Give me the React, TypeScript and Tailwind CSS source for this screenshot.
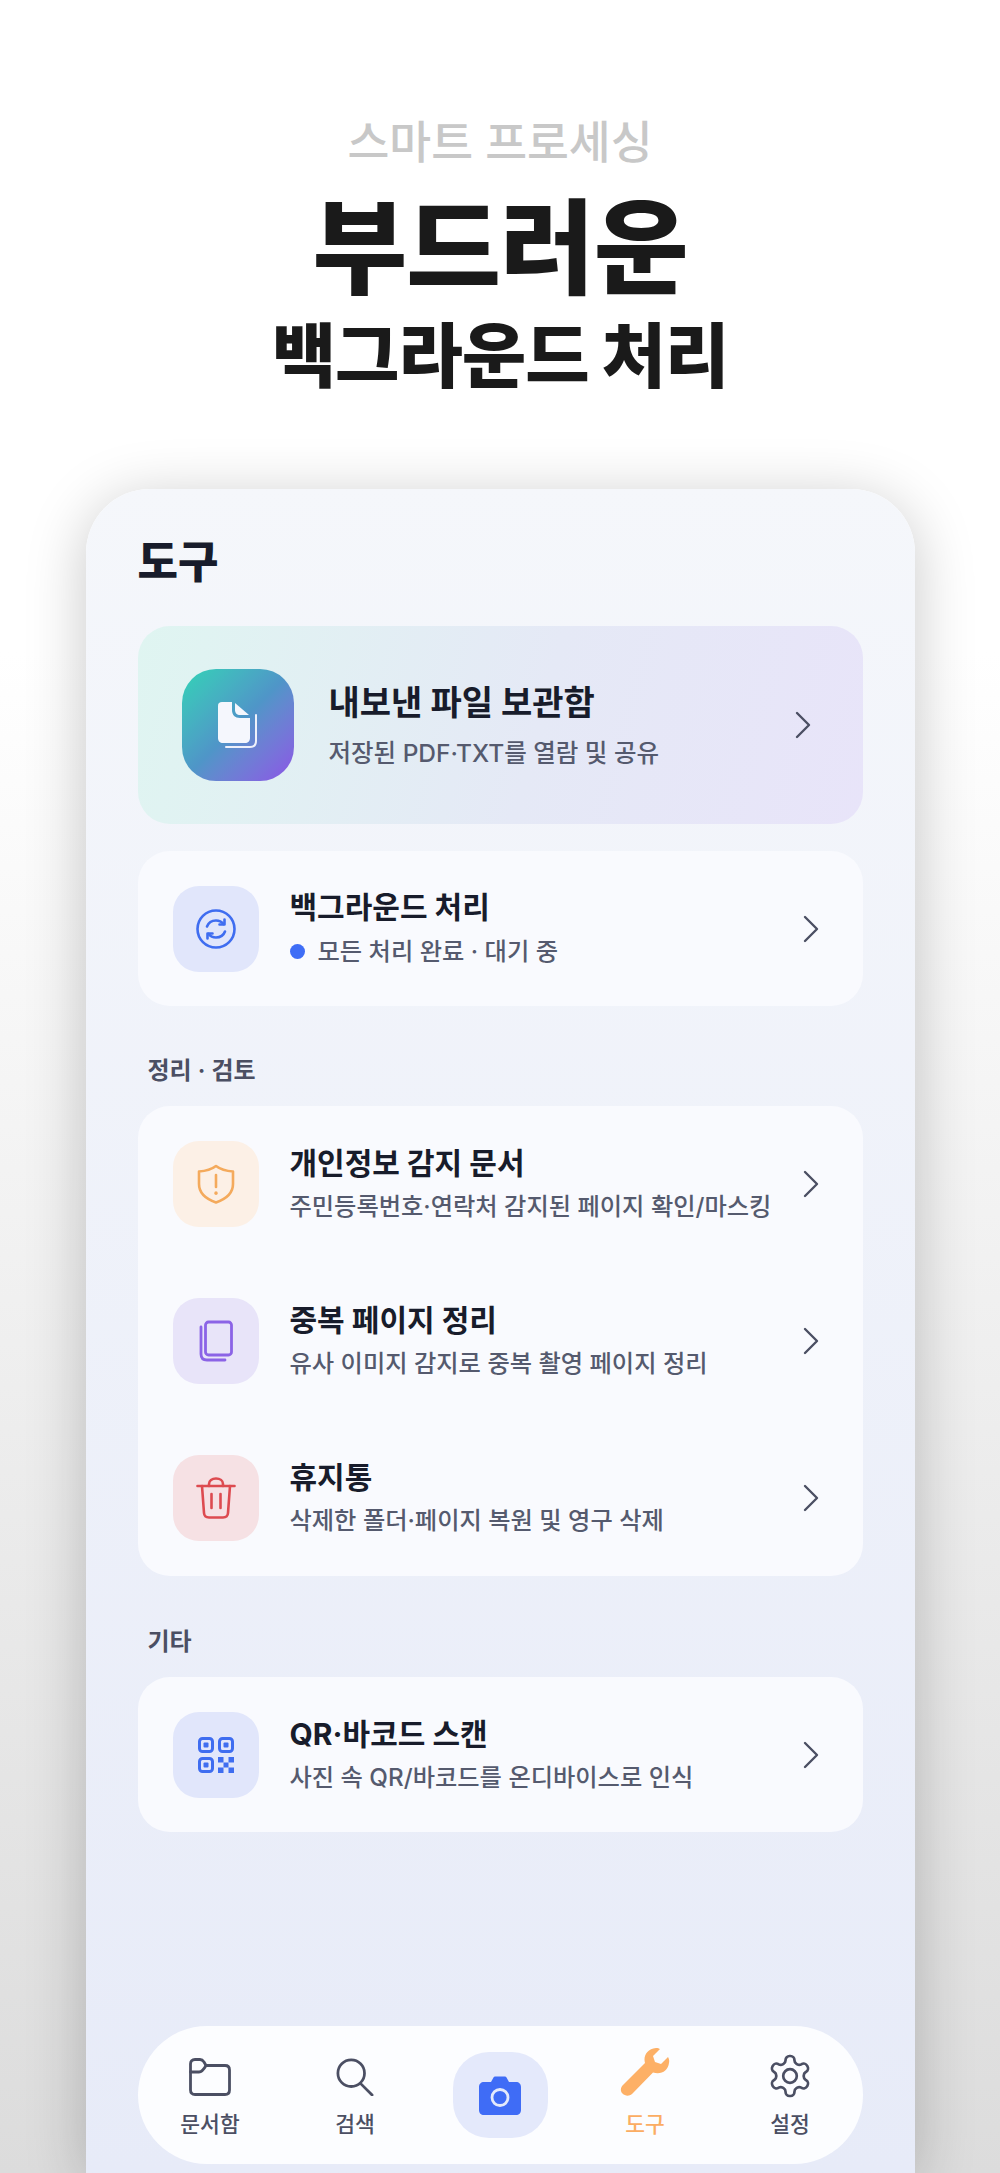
import React from "react";

const FONT = "font-['Inter','Noto_Sans_CJK_KR','Noto_Sans',sans-serif]";

function Chevron({ className = "" }: { className?: string }) {
  return (
    <svg width="16" height="28" viewBox="0 0 16 28" fill="none" className={className}>
      <path d="M2 2 L14 14 L2 26" stroke="#4b4f63" strokeWidth="2.4" strokeLinecap="round" strokeLinejoin="round" />
    </svg>
  );
}

function SyncIcon() {
  return (
    <svg width="40" height="40" viewBox="0 0 40 40" fill="none" stroke="#3f6df0" strokeWidth="2.6" strokeLinecap="round" strokeLinejoin="round">
      <circle cx="20" cy="20" r="18.5" />
      <path d="M11 17.5c1.500-4 5-6 9-6 3 0 5.500 1 7.500 3.500" />
      <path d="M28.500 10.500v5h-5" />
      <path d="M29 22.500c-1.500 4-5 6-9 6-3 0-5.500-1-7.500-3.500" />
      <path d="M11.500 29.500v-5h5" />
    </svg>
  );
}

function ShieldIcon() {
  return (
    <svg width="38" height="40" viewBox="0 0 38 40" fill="none" stroke="#f4aa5c" strokeWidth="2.6" strokeLinecap="round" strokeLinejoin="round">
      <path d="M19 2 C23 5 29 7 36 7.500 V20 C36 29 29 35 19 38.500 C9 35 2 29 2 20 V7.500 C9 7 15 5 19 2 Z" />
      <path d="M19 11 V23" />
      <path d="M19 29 V29.200" strokeWidth="3.400" />
    </svg>
  );
}

function PagesIcon() {
  return (
    <svg width="34" height="42" viewBox="0 0 34 42" fill="none" stroke="#8b63e6" strokeWidth="2.8" strokeLinecap="round" strokeLinejoin="round">
      <rect x="6.500" y="2" width="26" height="33" rx="3" />
      <path d="M2 7 V34 C2 38 4 40 8 40 H26" />
    </svg>
  );
}

function TrashIcon() {
  return (
    <svg width="40" height="42" viewBox="0 0 40 42" fill="none" stroke="#dd4b50" strokeWidth="2.6" strokeLinecap="round" strokeLinejoin="round">
      <path d="M1.500 9 H38.500" />
      <path d="M13 9 V7 C13 3.500 16 1.500 20 1.500 C24 1.500 27 3.500 27 7 V9" />
      <path d="M6 9 L8 36 C8.200 39 10 40.500 13 40.500 H27 C30 40.500 31.800 39 32 36 L34 9" />
      <path d="M15.500 17 V31" />
      <path d="M24.500 17 V31" />
    </svg>
  );
}

function QrIcon() {
  return (
    <svg width="36" height="36" viewBox="0 0 36 36" fill="none">
      <g stroke="#3f6df0" strokeWidth="3">
        <rect x="1.500" y="1.500" width="13" height="13" rx="3" />
        <rect x="21.500" y="1.500" width="13" height="13" rx="3" />
        <rect x="1.500" y="21.500" width="13" height="13" rx="3" />
      </g>
      <g fill="#3f6df0">
        <rect x="5.500" y="5.500" width="5" height="5" rx="1" />
        <rect x="25.500" y="5.500" width="5" height="5" rx="1" />
        <rect x="5.500" y="25.500" width="5" height="5" rx="1" />
        <rect x="20" y="20" width="5.500" height="5.500" />
        <rect x="30.500" y="20" width="5.500" height="5.500" />
        <rect x="25.500" y="25.500" width="5" height="5" />
        <rect x="20" y="30.500" width="5.500" height="5.500" />
        <rect x="30.500" y="30.500" width="5.500" height="5.500" />
      </g>
    </svg>
  );
}

function FolderIcon() {
  return (
    <svg width="42" height="38" viewBox="0 0 42 38" fill="none" stroke="#4b4f63" strokeWidth="2.800" strokeLinecap="round" strokeLinejoin="round">
      <path d="M1.500 6 C1.500 3 3 1.500 6 1.500 H11 C13 1.500 14 2.500 15 4 L17 7.500 H36 C39 7.500 40.500 9 40.500 12 V32 C40.500 35 39 36.500 36 36.500 H6 C3 36.500 1.500 35 1.500 32 Z" />
      <path d="M1.500 14 H10 C13 14 14.500 12 17 7.500" />
    </svg>
  );
}

function SearchIcon() {
  return (
    <svg width="38" height="38" viewBox="0 0 40 40" fill="none" stroke="#4b4f63" strokeWidth="2.900" strokeLinecap="round">
      <circle cx="16" cy="16" r="14" />
      <path d="M26 27 L38 39" />
    </svg>
  );
}

function CameraIcon() {
  return (
    <svg width="42" height="39" viewBox="0 0 42 39" fill="none">
      <path d="M5 6 H12 L14.500 1.500 C15 .8 15.500 .5 16.500 .5 H25.500 C26.500 .5 27 .8 27.500 1.500 L30 6 H37 C40 6 42 8 42 11 V34 C42 37 40 39 37 39 H5 C2 39 0 37 0 34 V11 C0 8 2 6 5 6 Z" fill="#3f6cf6" />
      <circle cx="21" cy="21.500" r="8" stroke="#e4eafb" strokeWidth="2.800" />
    </svg>
  );
}

function WrenchIcon() {
  return (
    <svg width="50" height="48" viewBox="0 0 50 48" fill="none">
      <path
        d="M3 37 L25 15 C23 8 27 1 36 0 C38 0 39 .5 40 1 L33 8 L35 14 L41 16 L48 9 C49 11 49.500 12 49 15 C48 23 41 27 33 24.500 L12 46 C9 48.500 5 48 2.500 45.500 C0 43 0.500 39.500 3 37 Z"
        fill="#fdb066"
      />
    </svg>
  );
}

function GearIcon() {
  return (
    <svg width="48" height="50" viewBox="0 0 24 24" fill="none" stroke="#4b4f63" strokeWidth="1.350" strokeLinecap="round" strokeLinejoin="round" className="-my-[5px]">
      <path d="M12.220 2h-.44a2 2 0 0 0-2 2v.18a2 2 0 0 1-1 1.730l-.43.250a2 2 0 0 1-2 0l-.15-.08a2 2 0 0 0-2.730.730l-.22.380a2 2 0 0 0 .730 2.730l.15.100a2 2 0 0 1 1 1.720v.510a2 2 0 0 1-1 1.740l-.15.090a2 2 0 0 0-.730 2.730l.22.380a2 2 0 0 0 2.730.730l.15-.08a2 2 0 0 1 2 0l.43.250a2 2 0 0 1 1 1.730V20a2 2 0 0 0 2 2h.44a2 2 0 0 0 2-2v-.18a2 2 0 0 1 1-1.730l.43-.250a2 2 0 0 1 2 0l.15.080a2 2 0 0 0 2.730-.730l.22-.390a2 2 0 0 0-.730-2.730l-.15-.080a2 2 0 0 1-1-1.740v-.5a2 2 0 0 1 1-1.740l.15-.090a2 2 0 0 0 .730-2.730l-.22-.380a2 2 0 0 0-2.730-.730l-.15.080a2 2 0 0 1-2 0l-.43-.250a2 2 0 0 1-1-1.730V4a2 2 0 0 0-2-2z" />
      <circle cx="12" cy="12" r="3.400" />
    </svg>
  );
}

function DocIcon() {
  return (
    <svg width="40" height="46" viewBox="0 0 40 46" fill="none">
      <path d="M38 13 V39 C38 43 36 45 32 45 H8" stroke="#eef1fb" strokeWidth="2" strokeLinecap="round" />
      <path d="M4 0 H14 V8 C14 13 17 16 22 16 H32 V36 C32 39 30 41 27 41 H5 C2 41 0 39 0 36 V4 C0 1 1.500 0 4 0 Z" fill="#f5f7fd" />
      <path d="M17 1 L31 13 H22 C19 13 17 11 17 8 Z" fill="#f5f7fd" />
    </svg>
  );
}

interface RowProps {
  icon: React.ReactNode;
  tile: string;
  title: string;
  children: React.ReactNode;
}

function Row({ icon, tile, title, children }: RowProps) {
  return (
    <div className="flex items-center h-[86px]">
      <div className={`w-[86px] h-[86px] rounded-[26px] flex items-center justify-center shrink-0 ${tile}`}>{icon}</div>
      <div className="ml-[31px] flex-1 min-w-0 pb-[1px]">
        <div className="text-[30px] leading-[40px] font-bold text-[#181c2b]">{title}</div>
        <div className="mt-[7px] text-[24.250px] leading-[34px] font-medium text-[#555a6e] whitespace-nowrap">{children}</div>
      </div>
      <Chevron className="mr-[8px] shrink-0" />
    </div>
  );
}

function Card({ children, className = "" }: { children: React.ReactNode; className?: string }) {
  return <div className={`rounded-[32px] bg-[#f9fafe] pl-[35px] pr-[36px] ${className}`}>{children}</div>;
}

function NavItem({ icon, label, active = false }: { icon: React.ReactNode; label: string; active?: boolean }) {
  return (
    <div className="flex flex-col items-center pb-[6px]">
      <div className="h-[50px] flex items-end justify-center">{icon}</div>
      <div className={`mt-[13px] text-[21.500px] leading-[30px] font-medium ${active ? "text-[#fbad63]" : "text-[#4b4f63]"}`}>{label}</div>
    </div>
  );
}

export default function App() {
  return (
    <div className={`${FONT} w-[1000px] h-[2173px] overflow-hidden bg-gradient-to-b from-white from-30% to-[#dcdcdc] flex flex-col items-center`}>
      <div className="mt-[113px] text-[45.500px] leading-[60px] font-medium text-[#c8c8c8]">스마트 프로세싱</div>
      <div className="mt-[14px] text-[103px] leading-[124px] font-black text-[#1a1a1a] tracking-[-1px]">부드러운</div>
      <div className="mt-[1px] text-[70px] leading-[90px] font-black text-[#1a1a1a] tracking-[-1px]">백그라운드 처리</div>

      <div className="mt-[87px] w-[829px] flex-1 rounded-t-[64px] bg-gradient-to-b from-[#f5f7fb] to-[#e7ebf8] shadow-[0_10px_60px_rgba(0,0,0,0.22)] px-[52px] flex flex-col">
        <h1 className="mt-[43px] text-[44px] leading-[60px] font-black text-[#181c2b]">도구</h1>

        <div className="mt-[34px] h-[198px] rounded-[32px] bg-[linear-gradient(105deg,#dff5f1,#e5e9f6_55%,#e8e4f9)] flex items-center pl-[44px] pr-[52px]">
          <div className="w-[112px] h-[112px] rounded-[34px] bg-gradient-to-br from-[#2fd3b5] via-[#4f95c8] to-[#8a52e6] flex items-center justify-center shrink-0">
            <DocIcon />
          </div>
          <div className="ml-[35px] flex-1">
            <div className="text-[34px] leading-[44px] font-bold text-[#181c2b]">내보낸 파일 보관함</div>
            <div className="mt-[11px] text-[24.500px] leading-[34px] font-medium text-[#555a6e] whitespace-nowrap">저장된 PDF·TXT를 열람 및 공유</div>
          </div>
          <Chevron />
        </div>

        <Card className="mt-[27px] h-[155px] flex flex-col justify-center">
          <Row icon={<SyncIcon />} tile="bg-[#e1e6fb]" title="백그라운드 처리">
            <span className="inline-flex items-center">
              <span className="w-[15px] h-[15px] rounded-full bg-[#3f6df6] mr-[13px]" />
              모든 처리 완료 · 대기 중
            </span>
          </Row>
        </Card>

        <div className="mt-[48px] pl-[10px] text-[24px] leading-[34px] font-semibold text-[#4b4f63]">정리 · 검토</div>

        <Card className="mt-[18px] h-[470px] flex flex-col justify-center gap-[71px]">
          <Row icon={<ShieldIcon />} tile="bg-[#fcf0e6]" title="개인정보 감지 문서">
            주민등록번호·연락처 감지된 페이지 확인/마스킹
          </Row>
          <Row icon={<PagesIcon />} tile="bg-[#e8e4f9]" title="중복 페이지 정리">
            유사 이미지 감지로 중복 촬영 페이지 정리
          </Row>
          <Row icon={<TrashIcon />} tile="bg-[#f6e1e4]" title="휴지통">
            삭제한 폴더·페이지 복원 및 영구 삭제
          </Row>
        </Card>

        <div className="mt-[49px] pl-[10px] text-[24px] leading-[34px] font-semibold text-[#4b4f63]">기타</div>

        <Card className="mt-[18px] h-[155px] flex flex-col justify-center">
          <Row icon={<QrIcon />} tile="bg-[#e1e6fb]" title="QR·바코드 스캔">
            사진 속 QR/바코드를 온디바이스로 인식
          </Row>
        </Card>

        <div className="mt-[194px] h-[138px] rounded-[69px] bg-[#fcfdff] grid grid-cols-5 items-center shrink-0">
          <NavItem icon={<FolderIcon />} label="문서함" />
          <NavItem icon={<SearchIcon />} label="검색" />
          <div className="flex justify-center">
            <div className="w-[95px] h-[86px] rounded-[36px] bg-[#e4e9fb] flex items-center justify-center">
              <CameraIcon />
            </div>
          </div>
          <NavItem icon={<WrenchIcon />} label="도구" active />
          <NavItem icon={<GearIcon />} label="설정" />
        </div>
      </div>
    </div>
  );
}
